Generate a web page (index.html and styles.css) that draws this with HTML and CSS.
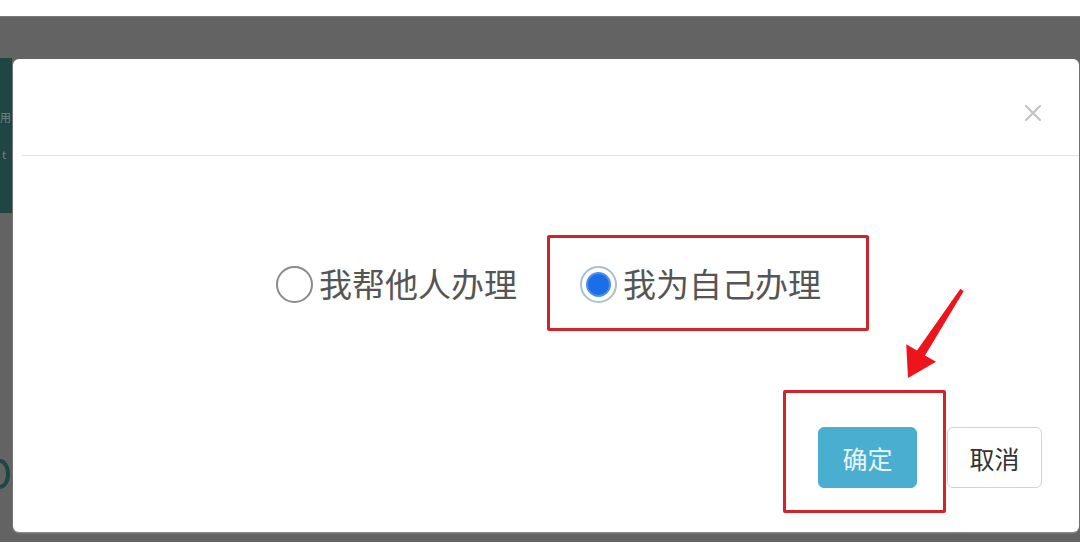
FILE: index.html
```html
<!DOCTYPE html>
<html lang="zh-CN">
<head>
<meta charset="utf-8">
<title>办理方式</title>
<link rel="stylesheet" href="styles.css">
</head>
<body>
<div class="page">
  <div class="top-strip"></div>
  <div class="overlay">
    <div class="peek">
      <div class="peek-block">
        <span class="peek-t1">用</span>
        <span class="peek-t2">t</span>
      </div>
      <div class="peek-arc"></div>
    </div>
    <div class="modal">
      <div class="modal-header">
        <button class="close" aria-label="关闭">
          <svg width="18" height="18" viewBox="0 0 18 18"><path d="M2 2 L16 16 M16 2 L2 16" stroke="#c4c4c4" stroke-width="2.2" stroke-linecap="round"/></svg>
        </button>
      </div>
      <div class="divider"></div>
      <div class="modal-body">
        <label class="radio">
          <span class="radio-circle"></span>
          <span class="radio-text">我帮他人办理</span>
        </label>
        <label class="radio radio-checked">
          <span class="radio-circle"><span class="radio-dot"></span></span>
          <span class="radio-text">我为自己办理</span>
        </label>
      </div>
      <div class="modal-footer">
        <button class="btn btn-primary">确定</button>
        <button class="btn btn-default">取消</button>
      </div>
    </div>
  </div>
  <div class="bottom-strip"></div>

  <div class="mark mark-radio"></div>
  <div class="mark mark-btn"></div>
  <svg class="arrow" width="1080" height="558" viewBox="0 0 1080 558">
    <polygon points="960.4,288.8 963.6,291.2 925,355.5 936,361.8 908,378 906.2,344.2 917,350.5" fill="#ee141c"/>
  </svg>
</div>
</body>
</html>
```

FILE: styles.css
```css
* { box-sizing: border-box; }
html, body {
  margin: 0;
  padding: 0;
  background: #ffffff;
  font-family: "Noto Sans CJK SC", "Noto Sans", "Liberation Sans", sans-serif;
}
.page {
  position: relative;
  width: 1080px;
  height: 558px;
  overflow: hidden;
  background: #ffffff;
}
.top-strip {
  height: 16px;
  background: #ffffff;
}
.overlay {
  height: 526px;
  background: #636363;
  border-top: 1px solid #7a7a7a;
  display: flex;
  align-items: flex-start;
}
.peek {
  width: 13px;
  flex: none;
  padding-top: 41px;
  display: flex;
  flex-direction: column;
}
.peek-block {
  width: 12px;
  height: 155px;
  background: #1f4545;
  overflow: hidden;
  color: #6f8585;
  font-size: 11px;
  line-height: 1;
}
.peek-t1 {
  display: block;
  margin-top: 54px;
  margin-left: 0;
}
.peek-t2 {
  display: block;
  margin-top: 26px;
  margin-left: 2px;
  font-size: 11px;
}
.peek-arc {
  margin-top: 246px;
  margin-left: -10px;
  width: 20px;
  height: 30px;
  border: 4px solid #1f4545;
  border-radius: 50%;
}
.modal {
  margin-top: 42px;
  width: 1066px;
  height: 473px;
  flex: none;
  background: #ffffff;
  border-radius: 6px;
  box-shadow: 0 1px 2px rgba(255,255,255,0.35);
  display: flex;
  flex-direction: column;
}
.modal-header {
  height: 96px;
  display: flex;
  align-items: center;
  justify-content: flex-end;
  padding-right: 37px;
  padding-top: 12px;
}
.close {
  border: 0;
  background: transparent;
  padding: 0;
  width: 18px;
  height: 18px;
  display: block;
}
.close svg { display: block; }
.divider {
  margin-left: 9px;
  border-top: 1px solid #e3e3e3;
}
.modal-body {
  height: 256px;
  display: flex;
  align-items: center;
  padding-left: 263px;
}
.radio {
  display: flex;
  align-items: center;
  gap: 6px;
}
.radio + .radio { margin-left: 63px; }
.radio-circle {
  width: 37px;
  height: 37px;
  border-radius: 50%;
  border: 2px solid #8a8a8a;
  background: #ffffff;
  display: flex;
  align-items: center;
  justify-content: center;
}
.radio-checked .radio-circle {
  border: 2px solid #a9bfd6;
}
.radio-dot {
  width: 25px;
  height: 25px;
  border-radius: 50%;
  background: #1b6fe6;
  border: 2px solid #4d8fe8;
}
.radio-text {
  font-size: 33px;
  line-height: 40px;
  color: #555555;
  margin-top: -3px;
}
.modal-footer {
  padding-top: 15px;
  display: flex;
  justify-content: flex-end;
  gap: 30px;
  padding-right: 37px;
}
.btn {
  height: 61px;
  border-radius: 6px;
  font-family: "Noto Sans CJK SC", "Noto Sans", sans-serif;
  font-size: 25px;
  padding: 0;
}
.btn-primary {
  width: 99px;
  background: #4aaed0;
  border: 1px solid #4aaed0;
  color: #e8f5fb;
}
.btn-default {
  width: 95px;
  background: #ffffff;
  border: 1px solid #d2d2d2;
  color: #333333;
}
.bottom-strip {
  height: 16px;
  background: #ffffff;
}
.mark {
  position: absolute;
  border: 3px solid #d0242c;
  border-radius: 2px;
}
.mark-radio {
  left: 547px;
  top: 235px;
  width: 322px;
  height: 96px;
}
.mark-btn {
  left: 783px;
  top: 390px;
  width: 163px;
  height: 123px;
}
.arrow {
  position: absolute;
  left: 0;
  top: 0;
  pointer-events: none;
}
```
